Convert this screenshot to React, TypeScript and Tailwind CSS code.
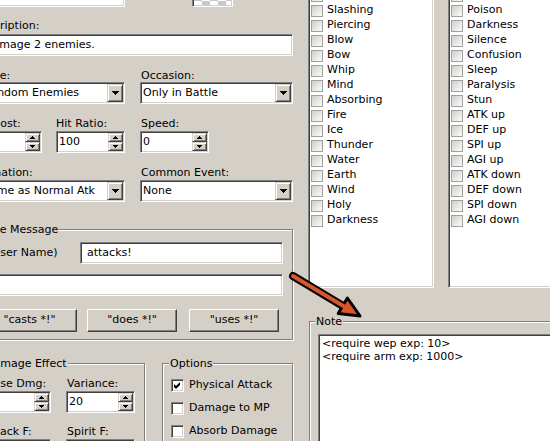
import React from "react";

const SUNKEN =
  "bg-white border border-t-[#808080] border-l-[#808080] border-b-white border-r-white shadow-[inset_1px_1px_0_#404040,inset_-1px_-1px_0_#d4d0c8]";
const RAISED =
  "bg-[#d4d0c8] border border-t-[#d4d0c8] border-l-[#d4d0c8] border-b-[#404040] border-r-[#404040] shadow-[inset_1px_1px_0_#ffffff,inset_-1px_-1px_0_#808080]";
const PUSH =
  "bg-[#d4d0c8] border border-t-white border-l-white border-b-[#404040] border-r-[#404040] shadow-[inset_-1px_-1px_0_#808080]";
const GROUP =
  "relative border border-[#808080] shadow-[inset_1px_1px_0_#ffffff,1px_1px_0_#ffffff]";
const LABEL = "h-[13px] leading-[13px] whitespace-nowrap";

function DownArrow() {
  return (
    <svg width="7" height="4" viewBox="0 0 7 4" shapeRendering="crispEdges">
      <rect x="0" y="0" width="7" height="1" fill="#000" />
      <rect x="1" y="1" width="5" height="1" fill="#000" />
      <rect x="2" y="2" width="3" height="1" fill="#000" />
      <rect x="3" y="3" width="1" height="1" fill="#000" />
    </svg>
  );
}

function TinyUp() {
  return (
    <svg width="5" height="3" viewBox="0 0 5 3" shapeRendering="crispEdges">
      <rect x="2" y="0" width="1" height="1" fill="#000" />
      <rect x="1" y="1" width="3" height="1" fill="#000" />
      <rect x="0" y="2" width="5" height="1" fill="#000" />
    </svg>
  );
}

function TinyDown() {
  return (
    <svg width="5" height="3" viewBox="0 0 5 3" shapeRendering="crispEdges">
      <rect x="0" y="0" width="5" height="1" fill="#000" />
      <rect x="1" y="1" width="3" height="1" fill="#000" />
      <rect x="2" y="2" width="1" height="1" fill="#000" />
    </svg>
  );
}

function Combo({ text }: { text: string }) {
  return (
    <div className={`${SUNKEN} h-[22px] p-[1px] flex items-stretch`}>
      <div className="flex-1 pl-[1px] flex items-center whitespace-nowrap overflow-hidden">
        {text}
      </div>
      <div className={`${RAISED} w-[16px] shrink-0 flex items-center justify-center`}>
        <DownArrow />
      </div>
    </div>
  );
}

function Spinner({ value }: { value: string }) {
  return (
    <div className={`${SUNKEN} h-[22px] p-[1px] flex items-stretch`}>
      <div className="flex-1 pl-[1px] flex items-center whitespace-nowrap overflow-hidden">
        {value}
      </div>
      <div className="w-[15px] shrink-0 flex flex-col">
        <div className={`${RAISED} h-[9px] flex items-center justify-center`}>
          <TinyUp />
        </div>
        <div className={`${RAISED} h-[9px] flex items-center justify-center`}>
          <TinyDown />
        </div>
      </div>
    </div>
  );
}

function TextBox({ value, className = "" }: { value: string; className?: string }) {
  return (
    <div
      className={`${SUNKEN} h-[22px] p-[1px] pl-[3px] flex items-center whitespace-nowrap overflow-hidden ${className}`}
    >
      {value}
    </div>
  );
}

function ListCheck({ label }: { label: string }) {
  return (
    <div className="h-[15px] flex items-center">
      <div className="w-[12px] h-[12px] shrink-0 border border-[#a0a0a0] bg-linear-to-br from-[#d0d0ca] to-[#fbfbf9]" />
      <span className="ml-[4px] whitespace-nowrap">{label}</span>
    </div>
  );
}

function ClassicCheck({ label, checked }: { label: string; checked?: boolean }) {
  return (
    <div className="h-[13px] flex items-center">
      <div className="w-[13px] h-[13px] shrink-0 bg-white border border-t-[#808080] border-l-[#808080] border-b-white border-r-white shadow-[inset_1px_1px_0_#404040,inset_-1px_-1px_0_#d4d0c8] flex items-center justify-center">
        {checked && (
          <svg width="7" height="7" viewBox="0 0 7 7">
            <polygon points="0,2 2,4 6,0 6,3 2,7 0,5" fill="#000" />
          </svg>
        )}
      </div>
      <span className="ml-[5px] whitespace-nowrap">{label}</span>
    </div>
  );
}

const ELEMENTS = [
  "Melee",
  "Slashing",
  "Piercing",
  "Blow",
  "Bow",
  "Whip",
  "Mind",
  "Absorbing",
  "Fire",
  "Ice",
  "Thunder",
  "Water",
  "Earth",
  "Wind",
  "Holy",
  "Darkness",
];

const STATES = [
  "Incapacitated",
  "Poison",
  "Darkness",
  "Silence",
  "Confusion",
  "Sleep",
  "Paralysis",
  "Stun",
  "ATK up",
  "DEF up",
  "SPI up",
  "AGI up",
  "ATK down",
  "DEF down",
  "SPI down",
  "AGI down",
];

function Checker() {
  const cells: React.ReactNode[] = [];
  for (let r = 0; r < 4; r++) {
    for (let c = 0; c < 5; c++) {
      cells.push(
        <rect
          key={`${r}-${c}`}
          x={c * 8}
          y={r * 8}
          width="8"
          height="8"
          fill={(r + c) % 2 === 0 ? "#c8c8c8" : "#ffffff"}
        />
      );
    }
  }
  return (
    <svg width="37" height="28" viewBox="0 0 37 28" shapeRendering="crispEdges">
      {cells}
    </svg>
  );
}

export default function App() {
  return (
    <div className="relative w-[550px] h-[441px] overflow-hidden bg-[#d4d0c8] text-black text-[11px] font-['DejaVu_Sans',sans-serif] flex items-start">
      {/* Left column */}
      <div className="ml-[-22px] w-[315px] shrink-0 flex flex-col *:shrink-0">
        {/* top row (cut) */}
        <div className="h-[7px] flex items-end">
          <div className={`${SUNKEN} ml-[2px] w-[145px] h-[22px] shrink-0`} />
          <div className={`${SUNKEN} ml-[67px] w-[41px] h-[32px] shrink-0 p-[1px] overflow-hidden`}>
            <Checker />
          </div>
        </div>

        <div className={`${LABEL} mt-[12px] ml-[-5px]`}>Description:</div>
        <TextBox value="Damage 2 enemies." className="mt-[2px] ml-[2px]" />

        {/* Scope / Occasion */}
        <div className="mt-[13px] flex">
          <div className="ml-[2px] w-[145px] shrink-0">
            <div className={`${LABEL} ml-[-7px]`}>Scope:</div>
            <Combo text="Random Enemies" />
          </div>
          <div className="ml-[15px] w-[153px] shrink-0">
            <div className={`${LABEL} ml-[1px]`}>Occasion:</div>
            <Combo text="Only in Battle" />
          </div>
        </div>

        {/* MP Cost / Hit Ratio / Speed */}
        <div className="mt-[13px] flex">
          <div className="ml-[2px] w-[62px] shrink-0">
            <div className={`${LABEL} ml-[-7px]`}>MP Cost:</div>
            <div className="mt-[1px]">
              <Spinner value="5" />
            </div>
          </div>
          <div className="ml-[14px] w-[69px] shrink-0">
            <div className={`${LABEL}`}>Hit Ratio:</div>
            <div className="mt-[1px]">
              <Spinner value="100" />
            </div>
          </div>
          <div className="ml-[15px] w-[69px] shrink-0">
            <div className={`${LABEL} ml-[1px]`}>Speed:</div>
            <div className="mt-[1px]">
              <Spinner value="0" />
            </div>
          </div>
        </div>

        {/* Animation / Common Event */}
        <div className="mt-[13px] flex">
          <div className="ml-[2px] w-[145px] shrink-0">
            <div className={`${LABEL} ml-[-7px]`}>Animation:</div>
            <div className="mt-[1px]">
              <Combo text="Same as Normal Atk" />
            </div>
          </div>
          <div className="ml-[15px] w-[153px] shrink-0">
            <div className={`${LABEL} ml-[1px]`}>Common Event:</div>
            <div className="mt-[1px]">
              <Combo text="None" />
            </div>
          </div>
        </div>

        {/* Use Message */}
        <div className={`${GROUP} mt-[27px] h-[111px] pt-[12px]`}>
          <span className="absolute top-[-7px] left-[6px] px-[1px] leading-[13px] bg-[#d4d0c8] whitespace-nowrap">
            Use Message
          </span>
          <div className="flex items-center h-[22px]">
            <span className="ml-[9px] whitespace-nowrap">(User Name)</span>
            <TextBox value="attacks!" className="ml-auto mr-[9px] w-[203px] shrink-0 pl-[6px]" />
          </div>
          <TextBox value="" className="mt-[10px] ml-[1px] mr-[9px]" />
          <div className="mt-[13px] flex h-[23px]">
            <div className={`${PUSH} ml-[3px] w-[95px] shrink-0 flex items-center justify-center whitespace-nowrap`}>
              &quot;casts *!&quot;
            </div>
            <div className={`${PUSH} ml-[10px] w-[90px] shrink-0 flex items-center justify-center whitespace-nowrap`}>
              &quot;does *!&quot;
            </div>
            <div className={`${PUSH} ml-[12px] w-[90px] shrink-0 flex items-center justify-center whitespace-nowrap`}>
              &quot;uses *!&quot;
            </div>
          </div>
        </div>

        {/* Damage Effect / Options */}
        <div className="mt-[23px] flex">
          <div className={`${GROUP} w-[167px] h-[110px] shrink-0 pt-[13px]`}>
            <span className="absolute top-[-7px] left-[5px] px-[1px] leading-[13px] bg-[#d4d0c8] whitespace-nowrap">
              Damage Effect
            </span>
            <div className="flex">
              <div className="ml-[1px] w-[71px] shrink-0">
                <div className={`${LABEL} ml-[6px]`}>Base Dmg:</div>
                <div className="mt-[1px]">
                  <Spinner value="30" />
                </div>
              </div>
              <div className="ml-[15px] w-[69px] shrink-0">
                <div className={`${LABEL} ml-[1px]`}>Variance:</div>
                <div className="mt-[1px]">
                  <Spinner value="20" />
                </div>
              </div>
            </div>
            <div className="mt-[12px] flex">
              <div className="ml-[1px] w-[71px] shrink-0">
                <div className={`${LABEL} ml-[4px]`}>Attack F:</div>
                <div className="mt-[1px]">
                  <Spinner value="100" />
                </div>
              </div>
              <div className="ml-[15px] w-[69px] shrink-0">
                <div className={`${LABEL} ml-[1px]`}>Spirit F:</div>
                <div className="mt-[1px]">
                  <Spinner value="0" />
                </div>
              </div>
            </div>
          </div>

          <div className={`${GROUP} ml-[17px] w-[131px] h-[110px] shrink-0 pt-[15px] pl-[8px]`}>
            <span className="absolute top-[-7px] left-[6px] px-[1px] leading-[13px] bg-[#d4d0c8] whitespace-nowrap">
              Options
            </span>
            <ClassicCheck label="Physical Attack" checked />
            <div className="mt-[10px]">
              <ClassicCheck label="Damage to MP" />
            </div>
            <div className="mt-[10px]">
              <ClassicCheck label="Absorb Damage" />
            </div>
          </div>
        </div>
      </div>

      {/* Right column */}
      <div className="ml-[15px] w-[300px] shrink-0 flex flex-col *:shrink-0">
        <div className="mt-[-15px] h-[303px] flex">
          <div className={`${SUNKEN} w-[126px] h-full shrink-0 pl-[2px] pt-[2px] overflow-hidden`}>
            {ELEMENTS.map((e) => (
              <ListCheck key={e} label={e} />
            ))}
          </div>
          <div className={`${SUNKEN} ml-[14px] w-[140px] h-full shrink-0 pl-[2px] pt-[2px] overflow-hidden`}>
            {STATES.map((s) => (
              <ListCheck key={s} label={s} />
            ))}
          </div>
        </div>

        <div className={`${GROUP} mt-[33px] ml-[1px] w-[280px] h-[160px] pt-[12px] pl-[8px]`}>
          <span className="absolute top-[-7px] left-[5px] px-[1px] leading-[13px] bg-[#d4d0c8] whitespace-nowrap">
            Note
          </span>
          <div className={`${SUNKEN} h-[150px] p-[1px] pl-[3px] pt-[2px]`}>
            <div className="leading-[13px] whitespace-nowrap">&lt;require wep exp: 10&gt;</div>
            <div className="leading-[13px] whitespace-nowrap">&lt;require arm exp: 1000&gt;</div>
          </div>
        </div>
      </div>

      {/* Annotation arrow (overlay) */}
      <svg
        className="absolute left-[285px] top-[265px] pointer-events-none"
        width="90"
        height="60"
        viewBox="0 0 90 60"
      >
        <line x1="8" y1="11" x2="58" y2="41" stroke="#000" strokeWidth="8" strokeLinecap="round" />
        <polygon
          points="75,51 53.2,48.4 62.4,33"
          fill="#d9552b"
          stroke="#000"
          strokeWidth="3"
          strokeLinejoin="round"
        />
        <line x1="8" y1="11" x2="60" y2="42" stroke="#d9552b" strokeWidth="4" strokeLinecap="round" />
      </svg>
    </div>
  );
}
